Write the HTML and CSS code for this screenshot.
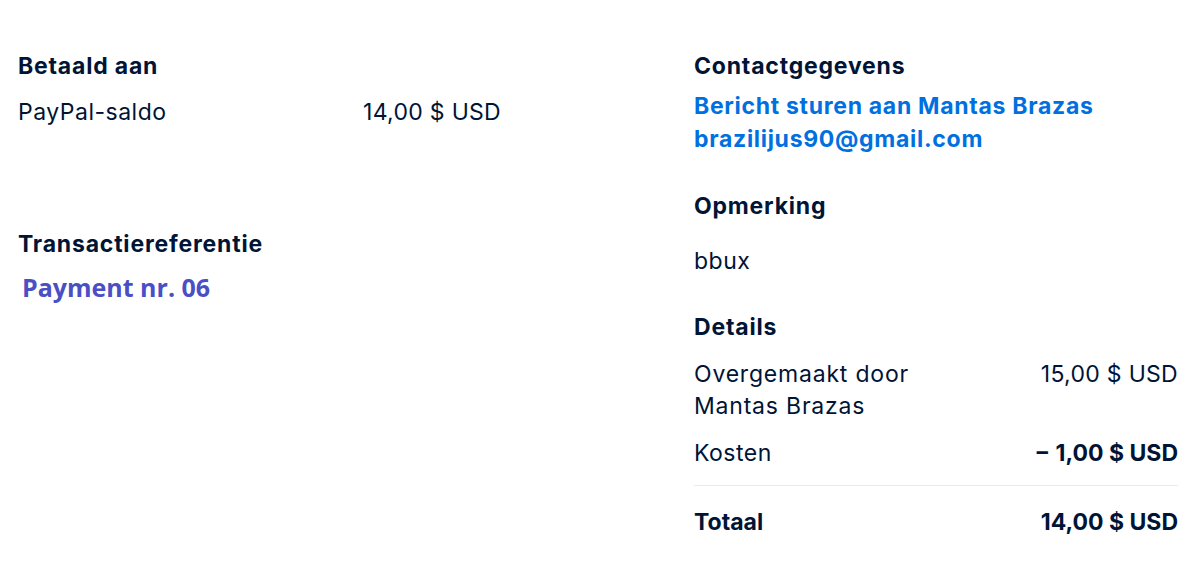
FILE: index.html
```
<!DOCTYPE html>
<html lang="nl">
<head>
<meta charset="utf-8">
<link rel="stylesheet" href="styles.css">
</head>
<body>
<div class="page">
  <div class="col left">
    <section class="block paid">
      <h3 class="title">Betaald aan</h3>
      <div class="row">
        <span>PayPal-saldo</span>
        <span class="num">14,00 $ USD</span>
      </div>
    </section>
    <section class="block ref">
      <h3 class="title">Transactiereferentie</h3>
      <div class="refval">Payment nr. 06</div>
    </section>
  </div>
  <div class="col right">
    <section class="block contact">
      <h3 class="title">Contactgegevens</h3>
      <a class="link" href="#">Bericht sturen aan Mantas Brazas</a>
      <a class="link" href="#">brazilijus90@gmail.com</a>
    </section>
    <section class="block note">
      <h3 class="title">Opmerking</h3>
      <p class="notetext">bbux</p>
    </section>
    <section class="block details">
      <h3 class="title">Details</h3>
      <div class="row">
        <span class="wide">Overgemaakt door<br>Mantas Brazas</span>
        <span class="num">15,00 $ USD</span>
      </div>
      <div class="row fee">
        <span>Kosten</span>
        <span class="numb bold">− 1,00 $ USD</span>
      </div>
      <div class="row total">
        <span class="bold tight">Totaal</span>
        <span class="numb bold">14,00 $ USD</span>
      </div>
    </section>
  </div>
</div>
</body>
</html>
```
FILE: styles.css
```
html, body {
  margin: 0;
  padding: 0;
  background: #ffffff;
}
body {
  font-family: Inter, "Noto Sans", sans-serif;
  color: #001435;
  font-size: 23px;
  line-height: 32px;
  letter-spacing: 0.5px;
}
.page {
  display: flex;
  padding: 50px 20px 0 18px;
  gap: 192px;
}
.col {
  width: 484px;
  display: flex;
  flex-direction: column;
}
.title {
  margin: 0;
  font-size: 23px;
  font-weight: 700;
  line-height: 32px;
  letter-spacing: 0.8px;
}
.row {
  display: flex;
  justify-content: space-between;
  align-items: flex-start;
}
.num {
  letter-spacing: 0.3px;
}
.numb {
  letter-spacing: 0;
}
.wide {
  letter-spacing: 0.8px;
}
.tight {
  letter-spacing: 0;
}
.paid .row {
  margin-top: 14px;
}
.left .row {
  width: 483px;
}
.ref {
  margin-top: 100px;
}
.refval {
  font-family: "Open Sans", "Noto Sans", sans-serif;
  font-weight: 700;
  color: #4a4fc6;
  font-size: 25px;
  letter-spacing: 0;
  line-height: 32px;
  margin-top: 11px;
  padding-left: 4px;
}
.link {
  display: block;
  color: #0070e0;
  font-weight: 700;
  letter-spacing: 0.7px;
  text-decoration: none;
  line-height: 33px;
}
.contact .title {
  margin-bottom: 8px;
}
.note {
  margin-top: 34px;
}
.notetext {
  margin: 23px 0 0;
}
.details {
  margin-top: 34px;
}
.details .row:first-of-type {
  margin-top: 15px;
}
.fee {
  margin-top: 15px;
  padding-bottom: 16px;
  border-bottom: 1px solid #eaeced;
}
.total {
  margin-top: 20px;
}
.bold {
  font-weight: 700;
}
```
